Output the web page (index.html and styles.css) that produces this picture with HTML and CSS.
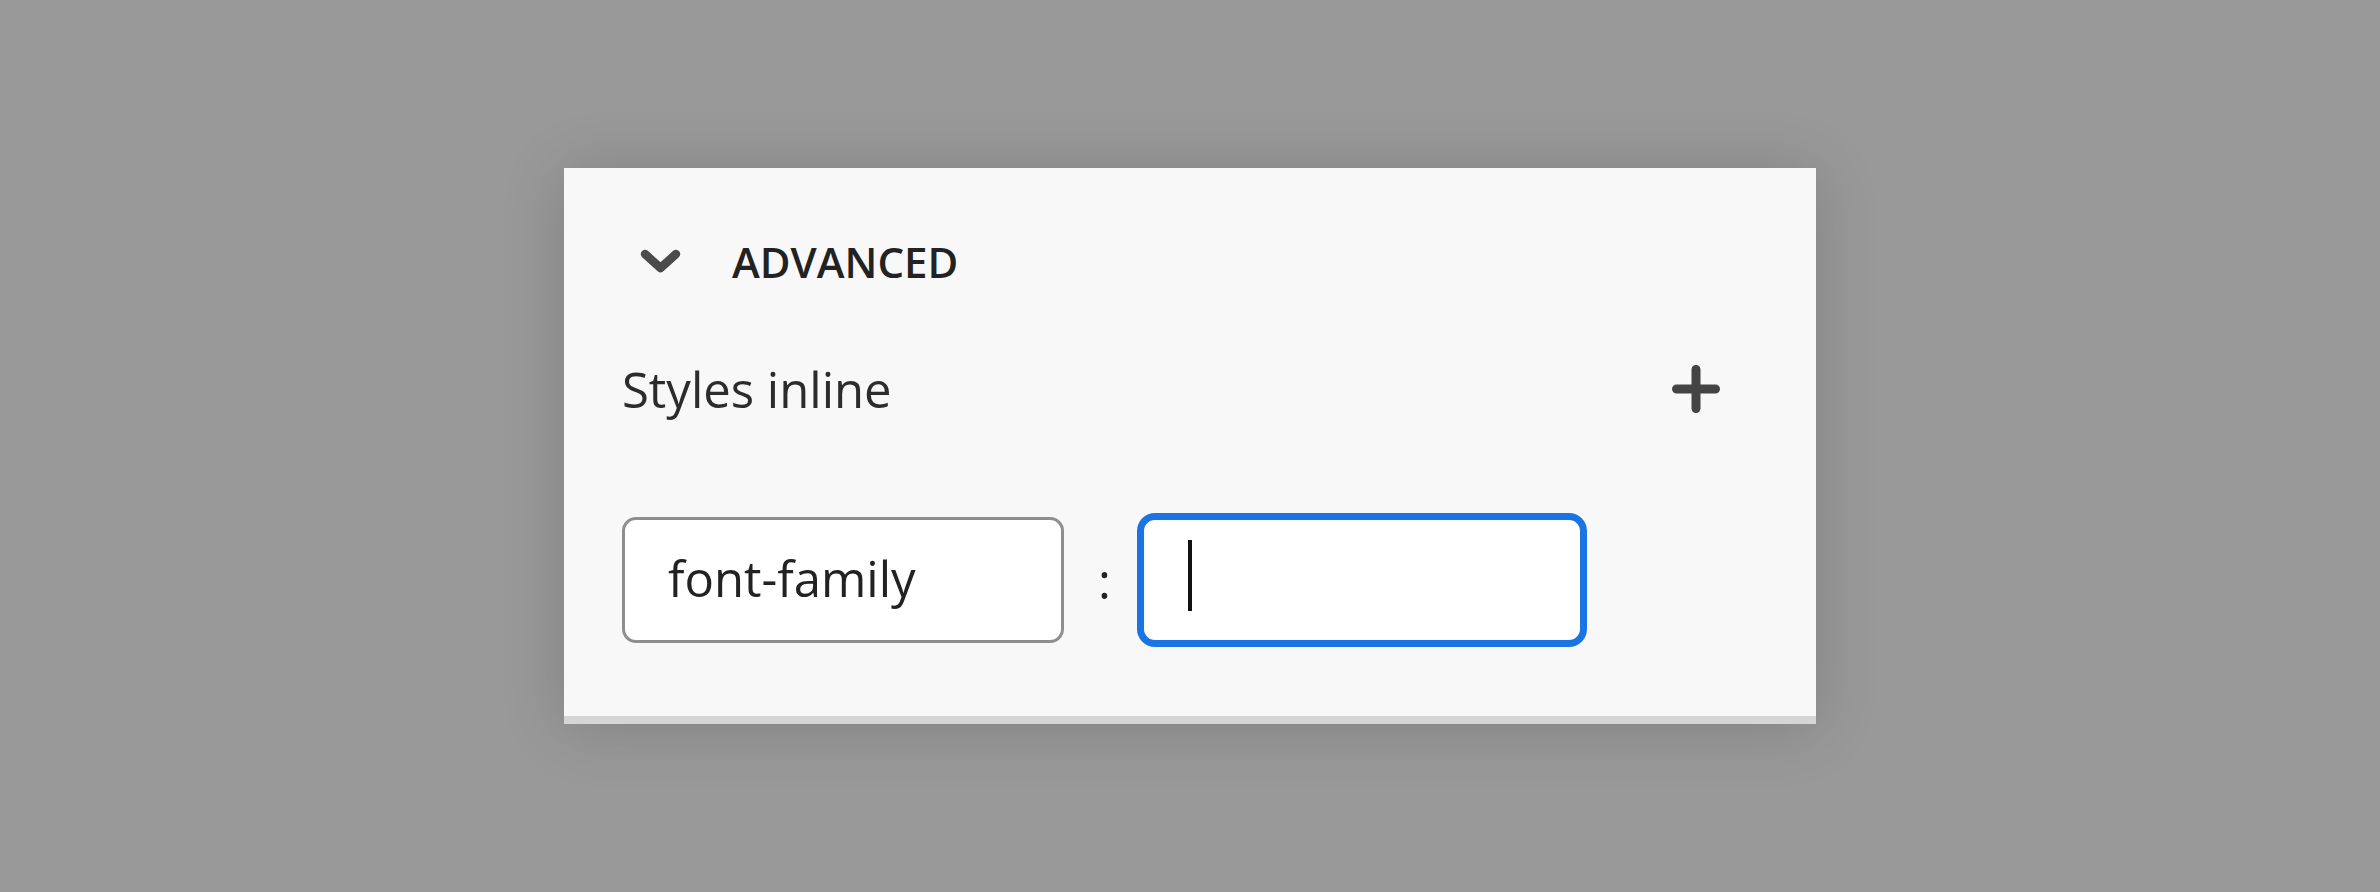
FILE: index.html
```html
<!DOCTYPE html>
<html lang="en">
<head>
<meta charset="utf-8">
<title>Advanced</title>
<link rel="stylesheet" href="styles.css">
</head>
<body>
<div class="stage">
  <section class="panel">
    <div class="panel-header">
      <svg class="chevron" width="41" height="24" viewBox="0 0 41 24" aria-hidden="true">
        <path d="M5 5 L20.5 19 L36 5" fill="none" stroke="#4b4b4b" stroke-width="8.5" stroke-linecap="round" stroke-linejoin="round"/>
      </svg>
      <h2 class="panel-title">ADVANCED</h2>
    </div>
    <div class="field-row">
      <span class="field-label">Styles inline</span>
      <button class="add-btn" type="button" aria-label="Add">
        <svg width="48" height="48" viewBox="0 0 48 48" aria-hidden="true">
          <path d="M24 4.5 V43.5 M4.5 24 H43.5" fill="none" stroke="#444444" stroke-width="9" stroke-linecap="round"/>
        </svg>
      </button>
    </div>
    <div class="style-row">
      <div class="text-box">font-family</div>
      <span class="colon">:</span>
      <div class="text-box focused"><span class="caret"></span></div>
    </div>
  </section>
</div>
</body>
</html>
```

FILE: styles.css
```css
html, body {
  margin: 0;
  padding: 0;
}

body {
  background: #999999;
  font-family: "Open Sans", "Liberation Sans", sans-serif;
}

.stage {
  width: 100vw;
  height: 100vh;
  display: flex;
  align-items: center;
  justify-content: center;
}

.panel {
  box-sizing: border-box;
  width: 1252px;
  height: 556px;
  background: #f8f8f8;
  border-bottom: 8px solid #d6d6d6;
  padding: 60px 58px 0 58px;
  box-shadow: 0 4px 60px rgba(0, 0, 0, 0.16);
  display: flex;
  flex-direction: column;
}

.panel-header {
  height: 66px;
  display: flex;
  align-items: center;
  padding-left: 18px;
}

.chevron {
  display: block;
  flex: none;
}

.panel-title {
  margin: 0 0 0 51px;
  font-size: 42px;
  font-weight: 600;
  color: #222222;
  letter-spacing: 0;
}

.field-row {
  margin-top: 61px;
  height: 68px;
  display: flex;
  align-items: center;
  justify-content: space-between;
}

.field-label {
  font-size: 49px;
  color: #2c2c2c;
}

.add-btn {
  border: 0;
  background: none;
  padding: 0;
  margin-right: 38px;
  width: 48px;
  height: 48px;
  display: flex;
}

.style-row {
  margin-top: 94px;
  display: flex;
  align-items: center;
}

.text-box {
  box-sizing: border-box;
  width: 442px;
  height: 126px;
  background: #ffffff;
  border: 3px solid #8e8e8e;
  border-radius: 14px;
  padding: 0 0 4px 43px;
  display: flex;
  align-items: center;
  font-size: 49px;
  color: #222222;
}

.text-box.focused {
  border-color: #1b74e4;
  box-shadow: 0 0 0 4px #1b74e4;
  border-radius: 14px;
  padding-left: 44px;
}

.caret {
  display: block;
  width: 4px;
  height: 71px;
  background: #111111;
  margin-bottom: 6px;
}

.colon {
  width: 77px;
  text-align: center;
  font-size: 49px;
  color: #222222;
  padding-left: 4px;
  box-sizing: border-box;
}
```
